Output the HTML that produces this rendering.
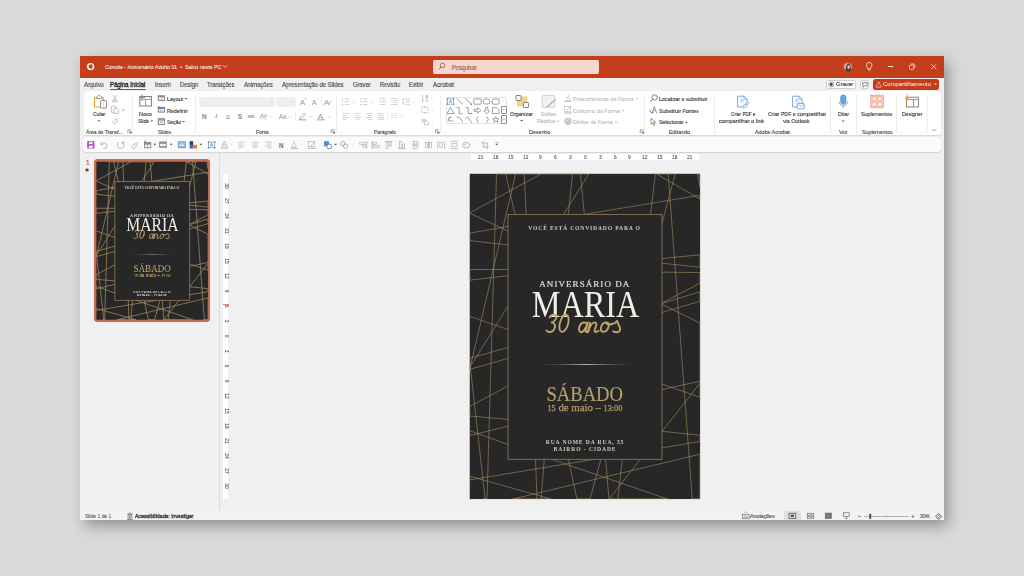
<!DOCTYPE html><html><head><meta charset="utf-8"><style>
*{margin:0;padding:0;box-sizing:border-box}
html,body{width:1024px;height:576px;overflow:hidden}
body{background:#d8d8d8;position:relative;font-family:"Liberation Sans",sans-serif}
.a{position:absolute}
.t{position:absolute;white-space:nowrap;transform-origin:0 50%;-webkit-text-stroke:0.1px currentColor;will-change:transform}
svg{overflow:visible}
</style></head><body>
<div class="a" style="left:0;top:0;width:1024px;height:576px;background:#d9d9d9"></div>
<div class="a" style="left:80px;top:56px;width:864px;height:464px;background:#f0f0f0;box-shadow:4.7px 6px 13.4px rgba(0,0,0,0.33)"></div>
<div class="a" style="left:80px;top:56px;width:864px;height:21.5px;background:#c43e1c"></div>
<svg class="a" style="left:85px;top:61px" width="12" height="12" viewBox="0 0 12 12"><circle cx="5.6" cy="5.6" r="3.7" fill="#fff" opacity="0.92"/><circle cx="5.6" cy="5.6" r="2" fill="#c43e1c"/><rect x="6" y="3.2" width="1" height="5" fill="#c43e1c"/></svg>
<div class="t" style="left:105.00px;top:64.01px;font:400 5.8px/6.96px 'Liberation Sans', sans-serif;color:#fdf0ea;transform:scaleX(0.9110);">Convite - Aniversário Adulto 01&nbsp; •&nbsp; Salvo neste PC</div>
<svg class="a" style="left:222px;top:64px" width="6" height="5" viewBox="0 0 6 5"><path d="M0.8 1.2 L3 3.4 L5.2 1.2" stroke="#fbe9e3" stroke-width="0.8" fill="none"/></svg>
<div class="a" style="left:433px;top:59.6px;width:166px;height:14.5px;background:#f2d8d0;border-radius:2px"></div>
<svg class="a" style="left:438px;top:62px" width="8" height="9" viewBox="0 0 8 9"><circle cx="4.6" cy="3.4" r="2.2" stroke="#a94a33" stroke-width="0.8" fill="none"/><path d="M3 5 L1 7.4" stroke="#a94a33" stroke-width="0.9"/></svg>
<div class="t" style="left:452.00px;top:63.54px;font:400 6.4px/7.68px 'Liberation Sans', sans-serif;color:#a94a33;transform:scaleX(0.8784);">Pesquisar</div>
<div class="a" style="left:887.8px;top:66.3px;width:5.2px;height:0.7px;background:#fbe9e3"></div>
<svg class="a" style="left:908px;top:63px" width="8" height="8" viewBox="0 0 8 8"><rect x="1.4" y="2" width="4.4" height="4.4" rx="1.2" stroke="#fbe9e3" stroke-width="0.8" fill="none"/><path d="M2.8 0.9 h2.6 a1.4 1.4 0 0 1 1.4 1.4 v2.6" stroke="#fbe9e3" stroke-width="0.7" fill="none"/></svg>
<svg class="a" style="left:930px;top:63px" width="8" height="8" viewBox="0 0 8 8"><path d="M1.2 1.2 L6.2 6.2 M6.2 1.2 L1.2 6.2" stroke="#fbe9e3" stroke-width="0.8"/></svg>
<div class="t" style="left:83.90px;top:80.84px;font:400 6.3px/7.56px 'Liberation Sans', sans-serif;color:#3a3a3a;transform:scaleX(0.9316);">Arquivo</div>
<div class="t" style="left:110.30px;top:80.84px;font:400 6.3px/7.56px 'Liberation Sans', sans-serif;color:#1f1f1f;transform:scaleX(0.9473);-webkit-text-stroke:0.32px currentColor;">Página Inicial</div>
<div class="t" style="left:154.80px;top:80.84px;font:400 6.3px/7.56px 'Liberation Sans', sans-serif;color:#3a3a3a;transform:scaleX(0.9141);">Inserir</div>
<div class="t" style="left:180.00px;top:80.84px;font:400 6.3px/7.56px 'Liberation Sans', sans-serif;color:#3a3a3a;transform:scaleX(0.9280);">Design</div>
<div class="t" style="left:207.00px;top:80.84px;font:400 6.3px/7.56px 'Liberation Sans', sans-serif;color:#3a3a3a;transform:scaleX(0.8928);">Transições</div>
<div class="t" style="left:243.70px;top:80.84px;font:400 6.3px/7.56px 'Liberation Sans', sans-serif;color:#3a3a3a;transform:scaleX(0.9209);">Animações</div>
<div class="t" style="left:282.10px;top:80.84px;font:400 6.3px/7.56px 'Liberation Sans', sans-serif;color:#3a3a3a;transform:scaleX(0.9272);">Apresentação de Slides</div>
<div class="t" style="left:353.00px;top:80.84px;font:400 6.3px/7.56px 'Liberation Sans', sans-serif;color:#3a3a3a;transform:scaleX(0.9141);">Gravar</div>
<div class="t" style="left:379.80px;top:80.84px;font:400 6.3px/7.56px 'Liberation Sans', sans-serif;color:#3a3a3a;transform:scaleX(0.8831);">Revisão</div>
<div class="t" style="left:409.00px;top:80.84px;font:400 6.3px/7.56px 'Liberation Sans', sans-serif;color:#3a3a3a;transform:scaleX(0.9077);">Exibir</div>
<div class="t" style="left:433.00px;top:80.84px;font:400 6.3px/7.56px 'Liberation Sans', sans-serif;color:#3a3a3a;transform:scaleX(0.9672);">Acrobat</div>
<div class="a" style="left:110.3px;top:89px;width:35.5px;height:1.4px;background:#c43e1c;border-radius:1px"></div>
<div class="a" style="left:826.4px;top:79.8px;width:29.3px;height:9.5px;background:#fff;border:0.8px solid #d0d0d0;border-radius:2px"></div>
<div class="t" style="left:835.60px;top:81.12px;font:400 6.0px/7.20px 'Liberation Sans', sans-serif;color:#262626;transform:scaleX(0.9489);">Gravar</div>
<div class="a" style="left:860.2px;top:79.8px;width:9.2px;height:9.5px;background:#fff;border:0.8px solid #d0d0d0;border-radius:2px"></div>
<svg class="a" style="left:861px;top:81px" width="8" height="8" viewBox="0 0 8 8"><path d="M1.8 1.6 h4.4 v3.4 h-2.8 l-1.2 1.2 v-1.2 h-0.4z" stroke="#333" stroke-width="0.6" fill="none"/></svg>
<div class="a" style="left:873.3px;top:79.2px;width:65.7px;height:10.5px;background:#c43e1c;border-radius:2.5px"></div>
<div class="t" style="left:883.00px;top:81.12px;font:400 6.0px/7.20px 'Liberation Sans', sans-serif;color:#fff;transform:scaleX(0.9791);-webkit-text-stroke:0px;">Compartilhamento</div>
<svg class="a" style="left:933px;top:82px" width="5" height="5" viewBox="0 0 5 5"><path d="M1 1.6 L2.5 3 L4 1.6z" fill="#fbe9e3"/></svg>
<div class="a" style="left:83.8px;top:91.4px;width:857px;height:43.7px;background:#fff;border-radius:4px 4px 2px 2px;box-shadow:0 0.5px 1px rgba(0,0,0,0.10)"></div>
<div class="a" style="left:83.4px;top:136.9px;width:857.4px;height:15.2px;background:#fbfbfb;border-radius:4px;box-shadow:0 0.6px 1px rgba(0,0,0,0.12)"></div>
<div class="t" style="left:93.00px;top:111.02px;font:400 5.9px/7.08px 'Liberation Sans', sans-serif;color:#2b2b2b;transform:scaleX(0.8865);">Colar</div>
<div class="t" style="left:86.40px;top:128.82px;font:400 5.9px/7.08px 'Liberation Sans', sans-serif;color:#3c3c3c;transform:scaleX(0.8483);">Área de Transf...</div>
<div class="t" style="left:139.00px;top:111.02px;font:400 5.9px/7.08px 'Liberation Sans', sans-serif;color:#2b2b2b;transform:scaleX(0.9293);">Novo</div>
<div class="t" style="left:137.80px;top:117.82px;font:400 5.9px/7.08px 'Liberation Sans', sans-serif;color:#2b2b2b;transform:scaleX(0.8537);">Slide</div>
<div class="t" style="left:166.80px;top:95.82px;font:400 5.9px/7.08px 'Liberation Sans', sans-serif;color:#2b2b2b;transform:scaleX(0.9145);">Layout</div>
<div class="t" style="left:166.80px;top:107.52px;font:400 5.9px/7.08px 'Liberation Sans', sans-serif;color:#2b2b2b;transform:scaleX(0.8894);">Redefinir</div>
<div class="t" style="left:166.80px;top:118.62px;font:400 5.9px/7.08px 'Liberation Sans', sans-serif;color:#2b2b2b;transform:scaleX(0.8368);">Seção</div>
<div class="t" style="left:157.60px;top:128.82px;font:400 5.9px/7.08px 'Liberation Sans', sans-serif;color:#3c3c3c;transform:scaleX(0.8276);">Slides</div>
<div class="a" style="left:199.3px;top:96.6px;width:75.4px;height:10.3px;background:#efefef;border-radius:2.2px"></div>
<div class="a" style="left:276.2px;top:96.6px;width:20.3px;height:10.3px;background:#efefef;border-radius:2.2px"></div>
<div class="t" style="left:299.80px;top:98.21px;font:400 7.6px/9.12px 'Liberation Sans', sans-serif;color:#9c9c9c;transform:scaleX(1.0258);">A</div>
<div class="t" style="left:312.20px;top:98.96px;font:400 6.8px/8.16px 'Liberation Sans', sans-serif;color:#9c9c9c;transform:scaleX(1.0142);">A</div>
<div class="t" style="left:324.00px;top:98.41px;font:400 7.6px/9.12px 'Liberation Sans', sans-serif;color:#9c9c9c;transform:scaleX(0.9863);">A</div>
<div class="t" style="left:202.20px;top:112.75px;font:700 6.6px/7.92px 'Liberation Sans', sans-serif;color:#8a8a8a;transform:scaleX(1.0070);">N</div>
<div class="t" style="left:215.30px;top:112.01px;font:italic 400 6.6px/7.92px 'Liberation Serif', serif;color:#9c9c9c;transform:scaleX(1.0918);">I</div>
<div class="t" style="left:226.30px;top:112.53px;font:400 6.2px/7.44px 'Liberation Sans', sans-serif;color:#9c9c9c;transform:scaleX(0.9189);">S</div>
<div class="t" style="left:237.60px;top:112.56px;font:700 6.8px/8.16px 'Liberation Sans', sans-serif;color:#8a8a8a;transform:scaleX(0.9260);">S</div>
<div class="t" style="left:248.00px;top:113.86px;font:400 4.8px/5.76px 'Liberation Sans', sans-serif;color:#9c9c9c;transform:scaleX(0.8528);">abc</div>
<div class="t" style="left:259.60px;top:112.90px;font:400 5.6px/6.72px 'Liberation Sans', sans-serif;color:#9c9c9c;transform:scaleX(1.0205);">AV</div>
<div class="t" style="left:278.60px;top:112.94px;font:400 6.4px/7.68px 'Liberation Sans', sans-serif;color:#9c9c9c;transform:scaleX(0.9453);">Aa</div>
<div class="t" style="left:317.60px;top:112.96px;font:400 6.8px/8.16px 'Liberation Sans', sans-serif;color:#9c9c9c;transform:scaleX(1.1464);">A</div>
<div class="t" style="left:256.00px;top:128.82px;font:400 5.9px/7.08px 'Liberation Sans', sans-serif;color:#3c3c3c;transform:scaleX(0.8616);">Fonte</div>
<div class="t" style="left:374.20px;top:128.82px;font:400 5.9px/7.08px 'Liberation Sans', sans-serif;color:#3c3c3c;transform:scaleX(0.8490);">Parágrafo</div>
<div class="a" style="left:445.6px;top:96.6px;width:61.9px;height:27.7px;border:0.7px solid #e2e2e2;border-radius:2px;background:#fff"></div>
<div class="a" style="left:500.5px;top:106px;width:6.4px;height:8.3px;border:0.7px solid #8c8c8c;border-radius:1px;background:#fff"></div>
<div class="a" style="left:500.5px;top:114.6px;width:6.4px;height:9.4px;border:0.7px solid #8c8c8c;border-radius:1px;background:#fff"></div>
<div class="t" style="left:510.20px;top:111.22px;font:400 5.9px/7.08px 'Liberation Sans', sans-serif;color:#2b2b2b;transform:scaleX(0.8801);">Organizar</div>
<div class="t" style="left:540.80px;top:111.22px;font:400 5.9px/7.08px 'Liberation Sans', sans-serif;color:#b4b4b4;transform:scaleX(0.8632);">Estilos</div>
<div class="t" style="left:536.80px;top:118.22px;font:400 5.9px/7.08px 'Liberation Sans', sans-serif;color:#b4b4b4;transform:scaleX(0.8638);">Rápidos</div>
<div class="t" style="left:573.30px;top:95.92px;font:400 5.9px/7.08px 'Liberation Sans', sans-serif;color:#b8b8b8;transform:scaleX(0.9088);">Preenchimento da Forma</div>
<div class="t" style="left:573.30px;top:107.62px;font:400 5.9px/7.08px 'Liberation Sans', sans-serif;color:#b8b8b8;transform:scaleX(0.9167);">Contorno da Forma</div>
<div class="t" style="left:573.30px;top:119.22px;font:400 5.9px/7.08px 'Liberation Sans', sans-serif;color:#b8b8b8;transform:scaleX(0.8859);">Efeitos de Forma</div>
<div class="t" style="left:528.60px;top:128.82px;font:400 5.9px/7.08px 'Liberation Sans', sans-serif;color:#3c3c3c;transform:scaleX(0.9061);">Desenho</div>
<div class="t" style="left:658.70px;top:95.92px;font:400 5.9px/7.08px 'Liberation Sans', sans-serif;color:#2b2b2b;transform:scaleX(0.8999);">Localizar e substituir</div>
<div class="t" style="left:658.70px;top:107.62px;font:400 5.9px/7.08px 'Liberation Sans', sans-serif;color:#2b2b2b;transform:scaleX(0.8990);">Substituir Fontes</div>
<div class="t" style="left:658.70px;top:119.22px;font:400 5.9px/7.08px 'Liberation Sans', sans-serif;color:#2b2b2b;transform:scaleX(0.8824);">Selecionar</div>
<div class="t" style="left:668.90px;top:128.82px;font:400 5.9px/7.08px 'Liberation Sans', sans-serif;color:#3c3c3c;transform:scaleX(0.9059);">Editando</div>
<div class="t" style="left:730.80px;top:111.02px;font:400 5.9px/7.08px 'Liberation Sans', sans-serif;color:#2b2b2b;transform:scaleX(0.7867);">Criar PDF e</div>
<div class="t" style="left:719.20px;top:118.02px;font:400 5.9px/7.08px 'Liberation Sans', sans-serif;color:#2b2b2b;transform:scaleX(0.9441);">compartilhar o link</div>
<div class="t" style="left:767.80px;top:111.02px;font:400 5.9px/7.08px 'Liberation Sans', sans-serif;color:#2b2b2b;transform:scaleX(0.8920);">Criar PDF e compartilhar</div>
<div class="t" style="left:783.40px;top:118.02px;font:400 5.9px/7.08px 'Liberation Sans', sans-serif;color:#2b2b2b;transform:scaleX(0.8945);">via Outlook</div>
<div class="t" style="left:755.40px;top:128.82px;font:400 5.9px/7.08px 'Liberation Sans', sans-serif;color:#3c3c3c;transform:scaleX(0.9042);">Adobe Acrobat</div>
<div class="t" style="left:837.70px;top:111.02px;font:400 5.9px/7.08px 'Liberation Sans', sans-serif;color:#2b2b2b;transform:scaleX(0.8830);">Ditar</div>
<div class="t" style="left:839.00px;top:128.82px;font:400 5.9px/7.08px 'Liberation Sans', sans-serif;color:#3c3c3c;transform:scaleX(0.8535);">Voz</div>
<div class="t" style="left:861.20px;top:111.02px;font:400 5.9px/7.08px 'Liberation Sans', sans-serif;color:#2b2b2b;transform:scaleX(0.9060);">Suplementos</div>
<div class="t" style="left:861.80px;top:128.82px;font:400 5.9px/7.08px 'Liberation Sans', sans-serif;color:#3c3c3c;transform:scaleX(0.8885);">Suplementos</div>
<div class="t" style="left:901.80px;top:111.02px;font:400 5.9px/7.08px 'Liberation Sans', sans-serif;color:#2b2b2b;transform:scaleX(0.8724);">Designer</div>
<div class="t" style="left:279.00px;top:142.14px;font:700 6.4px/7.68px 'Liberation Sans', sans-serif;color:#777;">N</div>
<div class="a" style="left:219px;top:152.5px;width:0.8px;height:358.5px;background:#dcdcdc"></div>
<div class="a" style="left:80px;top:510.5px;width:864px;height:0.8px;background:#e0e0e0"></div>
<div class="a" style="left:80px;top:511.3px;width:864px;height:8.7px;background:#f3f3f3"></div>
<div class="a" style="left:470.7px;top:154px;width:228.5px;height:6px;background:#fff"></div>
<div class="t" style="left:477.83px;top:154.76px;font:400 4.8px/5.76px 'Liberation Sans', sans-serif;color:#555;">21</div>
<div class="t" style="left:492.76px;top:154.76px;font:400 4.8px/5.76px 'Liberation Sans', sans-serif;color:#555;">18</div>
<div class="t" style="left:507.69px;top:154.76px;font:400 4.8px/5.76px 'Liberation Sans', sans-serif;color:#555;">15</div>
<div class="t" style="left:522.62px;top:154.76px;font:400 4.8px/5.76px 'Liberation Sans', sans-serif;color:#555;">12</div>
<div class="t" style="left:538.89px;top:154.76px;font:400 4.8px/5.76px 'Liberation Sans', sans-serif;color:#555;">9</div>
<div class="t" style="left:553.82px;top:154.76px;font:400 4.8px/5.76px 'Liberation Sans', sans-serif;color:#555;">6</div>
<div class="t" style="left:568.75px;top:154.76px;font:400 4.8px/5.76px 'Liberation Sans', sans-serif;color:#555;">3</div>
<div class="t" style="left:583.68px;top:154.76px;font:400 4.8px/5.76px 'Liberation Sans', sans-serif;color:#555;">0</div>
<div class="t" style="left:598.61px;top:154.76px;font:400 4.8px/5.76px 'Liberation Sans', sans-serif;color:#555;">3</div>
<div class="t" style="left:613.54px;top:154.76px;font:400 4.8px/5.76px 'Liberation Sans', sans-serif;color:#555;">6</div>
<div class="t" style="left:628.47px;top:154.76px;font:400 4.8px/5.76px 'Liberation Sans', sans-serif;color:#555;">9</div>
<div class="t" style="left:642.06px;top:154.76px;font:400 4.8px/5.76px 'Liberation Sans', sans-serif;color:#555;">12</div>
<div class="t" style="left:656.99px;top:154.76px;font:400 4.8px/5.76px 'Liberation Sans', sans-serif;color:#555;">15</div>
<div class="t" style="left:671.92px;top:154.76px;font:400 4.8px/5.76px 'Liberation Sans', sans-serif;color:#555;">18</div>
<div class="t" style="left:686.85px;top:154.76px;font:400 4.8px/5.76px 'Liberation Sans', sans-serif;color:#555;">21</div>
<div class="a" style="left:223px;top:174px;width:5px;height:324.6px;background:#fff"></div>
<div class="t" style="left:217.6px;top:183.4px;width:16px;height:6px;text-align:center;font:400 4.8px/6px 'Liberation Sans',sans-serif;color:#555;transform:rotate(90deg);transform-origin:50% 50%">30</div>
<div class="t" style="left:217.6px;top:198.37px;width:16px;height:6px;text-align:center;font:400 4.8px/6px 'Liberation Sans',sans-serif;color:#555;transform:rotate(90deg);transform-origin:50% 50%">27</div>
<div class="t" style="left:217.6px;top:213.34px;width:16px;height:6px;text-align:center;font:400 4.8px/6px 'Liberation Sans',sans-serif;color:#555;transform:rotate(90deg);transform-origin:50% 50%">24</div>
<div class="t" style="left:217.6px;top:228.31px;width:16px;height:6px;text-align:center;font:400 4.8px/6px 'Liberation Sans',sans-serif;color:#555;transform:rotate(90deg);transform-origin:50% 50%">21</div>
<div class="t" style="left:217.6px;top:243.28px;width:16px;height:6px;text-align:center;font:400 4.8px/6px 'Liberation Sans',sans-serif;color:#555;transform:rotate(90deg);transform-origin:50% 50%">18</div>
<div class="t" style="left:217.6px;top:258.25px;width:16px;height:6px;text-align:center;font:400 4.8px/6px 'Liberation Sans',sans-serif;color:#555;transform:rotate(90deg);transform-origin:50% 50%">15</div>
<div class="t" style="left:217.6px;top:273.22px;width:16px;height:6px;text-align:center;font:400 4.8px/6px 'Liberation Sans',sans-serif;color:#555;transform:rotate(90deg);transform-origin:50% 50%">12</div>
<div class="t" style="left:217.6px;top:288.19px;width:16px;height:6px;text-align:center;font:400 4.8px/6px 'Liberation Sans',sans-serif;color:#555;transform:rotate(90deg);transform-origin:50% 50%">9</div>
<div class="t" style="left:217.6px;top:303.16px;width:16px;height:6px;text-align:center;font:400 4.8px/6px 'Liberation Sans',sans-serif;color:#555;transform:rotate(90deg);transform-origin:50% 50%">6</div>
<div class="t" style="left:217.6px;top:318.13px;width:16px;height:6px;text-align:center;font:400 4.8px/6px 'Liberation Sans',sans-serif;color:#555;transform:rotate(90deg);transform-origin:50% 50%">3</div>
<div class="t" style="left:217.6px;top:333.1px;width:16px;height:6px;text-align:center;font:400 4.8px/6px 'Liberation Sans',sans-serif;color:#555;transform:rotate(90deg);transform-origin:50% 50%">0</div>
<div class="t" style="left:217.6px;top:348.07000000000005px;width:16px;height:6px;text-align:center;font:400 4.8px/6px 'Liberation Sans',sans-serif;color:#555;transform:rotate(90deg);transform-origin:50% 50%">3</div>
<div class="t" style="left:217.6px;top:363.04px;width:16px;height:6px;text-align:center;font:400 4.8px/6px 'Liberation Sans',sans-serif;color:#555;transform:rotate(90deg);transform-origin:50% 50%">6</div>
<div class="t" style="left:217.6px;top:378.01px;width:16px;height:6px;text-align:center;font:400 4.8px/6px 'Liberation Sans',sans-serif;color:#555;transform:rotate(90deg);transform-origin:50% 50%">9</div>
<div class="t" style="left:217.6px;top:392.98px;width:16px;height:6px;text-align:center;font:400 4.8px/6px 'Liberation Sans',sans-serif;color:#555;transform:rotate(90deg);transform-origin:50% 50%">12</div>
<div class="t" style="left:217.6px;top:407.95000000000005px;width:16px;height:6px;text-align:center;font:400 4.8px/6px 'Liberation Sans',sans-serif;color:#555;transform:rotate(90deg);transform-origin:50% 50%">15</div>
<div class="t" style="left:217.6px;top:422.92px;width:16px;height:6px;text-align:center;font:400 4.8px/6px 'Liberation Sans',sans-serif;color:#555;transform:rotate(90deg);transform-origin:50% 50%">18</div>
<div class="t" style="left:217.6px;top:437.89px;width:16px;height:6px;text-align:center;font:400 4.8px/6px 'Liberation Sans',sans-serif;color:#555;transform:rotate(90deg);transform-origin:50% 50%">21</div>
<div class="t" style="left:217.6px;top:452.86px;width:16px;height:6px;text-align:center;font:400 4.8px/6px 'Liberation Sans',sans-serif;color:#555;transform:rotate(90deg);transform-origin:50% 50%">24</div>
<div class="t" style="left:217.6px;top:467.83000000000004px;width:16px;height:6px;text-align:center;font:400 4.8px/6px 'Liberation Sans',sans-serif;color:#555;transform:rotate(90deg);transform-origin:50% 50%">27</div>
<div class="t" style="left:217.6px;top:482.80000000000007px;width:16px;height:6px;text-align:center;font:400 4.8px/6px 'Liberation Sans',sans-serif;color:#555;transform:rotate(90deg);transform-origin:50% 50%">30</div>
<div class="a" style="left:222.6px;top:303.6px;width:6px;height:0.6px;background:#f08070"></div>
<div class="t" style="left:85.30px;top:512.62px;font:400 5.9px/7.08px 'Liberation Sans', sans-serif;color:#505050;transform:scaleX(0.8472);">Slide 1 de 1</div>
<div class="t" style="left:135.10px;top:512.52px;font:400 6.0px/7.20px 'Liberation Sans', sans-serif;color:#2a2a2a;transform:scaleX(0.8698);-webkit-text-stroke:0.3px currentColor;">Acessibilidade: investigar</div>
<div class="t" style="left:750.00px;top:512.62px;font:400 5.9px/7.08px 'Liberation Sans', sans-serif;color:#404040;transform:scaleX(0.8859);">Anotações</div>
<div class="a" style="left:783.5px;top:511.3px;width:17px;height:8.7px;background:#dedede"></div>
<div class="t" style="left:920.30px;top:512.62px;font:400 5.9px/7.08px 'Liberation Sans', sans-serif;color:#404040;transform:scaleX(0.7960);">30%</div>
<svg width="0" height="0" style="position:absolute"><defs>
<linearGradient id="dv" x1="0" x2="1" y1="0" y2="0"><stop offset="0" stop-color="#8a7656" stop-opacity="0"/><stop offset="0.5" stop-color="#d8d4cc"/><stop offset="1" stop-color="#8a7656" stop-opacity="0"/></linearGradient>
<symbol id="slide" viewBox="0 0 230.8 325.6">
<rect x="0" y="0" width="230.8" height="325.6" fill="#272727"/>
<path d="M27.0 0.4L17.5 325.6M36.2 0.4L45.5 40.7M46.1 0.4L0.0 196.4M54.7 0.4L56.7 40.7M71.3 0.4L0.0 39.5M0.0 39.5L38.4 57.4M103.0 0.4L98.9 40.7M110.9 0.4L114.8 40.7M119.3 0.4L94.2 40.6M185.8 0.4L181.1 40.7M187.0 0.4L230.8 25.7M198.7 0.4L222.8 325.6M205.7 0.4L192.4 50.1M115.8 40.6L230.8 21.6M228.0 0.4L230.8 14.0M0.0 59.6L38.4 52.8M0.0 66.9L38.4 71.4M0.0 95.9L38.4 95.9M0.0 106.6L38.4 102.1M38.4 132.6L0.0 194.4M0.0 142.7L38.4 155.9M0.0 184.7L38.4 174.0M0.0 195.9L38.4 184.7M0.7 192.4L15.7 325.6M38.4 212.5L0.0 232.8M0.0 242.4L38.4 245.8M0.0 262.1L38.4 252.6M0.0 257.1L38.4 270.8M0.0 302.5L82.0 325.6M0.0 306.4L124.5 285.7M66.0 285.6L67.5 325.6M74.8 285.6L71.5 325.6M42.9 325.6L230.8 280.5M82.2 285.7L198.5 325.6M98.9 285.7L107.5 325.6M131.4 285.7L120.4 325.6M136.1 285.7L139.5 325.6M152.8 285.7L148.3 325.6M170.9 285.6L139.5 325.6M192.3 274.3L230.8 267.8M192.6 210.4L230.8 223.9M192.6 216.0L230.8 207.5M192.6 257.7L230.8 209.2M192.6 257.7L230.8 261.7M192.6 89.6L230.8 93.7M192.6 98.6L230.8 99.0M192.6 129.3L230.8 109.5M192.6 129.8L230.8 118.0M192.6 138.8L230.8 127.6M192.6 130.9L230.8 149.6M192.6 85.0L230.8 81.1" stroke="#a38a62" stroke-width="0.62" fill="none" vector-effect="non-scaling-stroke"/><path d="M27.0 0.35L119.3 0.35M185.8 0.35L205.7 0.35M228.0 0.35L230.8 0.35M13.5 325.25L17.5 325.25M42.9 325.25L82.0 325.25M107.5 325.25L120.4 325.25M139.5 325.25L198.5 325.25M222.8 325.25L230.8 325.25M0.35 59.6L0.35 66.9M0.35 95.9L0.35 106.6M0.35 184.7L0.35 195.9M0.35 232.8L0.35 242.4M0.35 257.1L0.35 262.1M0.35 302.5L0.35 306.4M230.45 0.4L230.45 14.0M230.45 21.6L230.45 25.7M230.45 81.1L230.45 93.7M230.45 99.0L230.45 109.5M230.45 118.0L230.45 127.6M230.45 149.6L230.45 223.9M230.45 261.7L230.45 267.8M230.45 280.5L230.45 325.6" stroke="#a38a62" stroke-width="0.7" fill="none" vector-effect="non-scaling-stroke"/>
<rect x="38.5" y="40.9" width="154" height="244.9" fill="#272727" stroke="#a38a62" stroke-width="0.7" vector-effect="non-scaling-stroke"/>
<text x="58.8" y="56" font-family="Liberation Serif" font-weight="700" font-size="5.7" fill="#cdc9c1" textLength="111.7" lengthAdjust="spacing">VOCÊ ESTÁ CONVIDADO PARA O</text>
<text x="69.8" y="113.5" font-family="Liberation Serif" font-size="9" stroke="#dedad2" stroke-width="0.22" fill="#dedad2" textLength="90" lengthAdjust="spacing">ANIVERSÁRIO DA</text>
<text x="62.2" y="143.2" font-family="Liberation Serif" font-size="38.6" fill="#f2eee6" textLength="107.6" lengthAdjust="spacingAndGlyphs">MARIA</text>
<g transform="translate(-469.5 -173.6)" fill="none" stroke="#c4a46c" stroke-width="1.85" stroke-linecap="round" stroke-linejoin="round">
<path d="M549.6 317.4 C550.4 314.8 555.6 313.4 556.4 316.2 C557 318.6 554.2 321.8 551.6 322.6 C555 322.6 555.8 326 554.4 328.8 C552.8 332.4 548.2 333.2 546.4 330.4"/>
<ellipse cx="564" cy="323.3" rx="4.1" ry="8.9" transform="rotate(16 564 323.3)"/>
<path d="M586.8 323.6 C585.6 321.8 581 322 579.4 326.6 C578 330.6 580 332.8 582 332 C584.4 331.2 586.4 326.4 587.8 322.4 L585.6 330.4 C585.2 332.4 587 332.4 588.8 330.8"/>
<path d="M590 322.6 L587.8 332.2 C589.6 327 592 322.4 594.6 322.4 C596.8 322.4 596.4 324.6 595.8 326.6 L594.6 330.4 C594.2 332.4 596.2 332.6 598.6 330.8"/>
<path d="M606.4 322.4 C603.2 321.9 600.6 326 600.8 329.2 C601 332.8 605.6 332.6 607.6 329.2 C609.4 326 609 322.6 606.4 322.4 C606 324.2 608.4 325.2 612 324"/>
<path d="M612 324.2 C614.4 323.6 616 322.4 617.2 320.8 C617.2 323.8 620.4 326.4 620.2 329.4 C620 332.2 616.4 333 613.2 331.4"/>
</g>
<rect x="69.5" y="190.6" width="94.8" height="0.8" fill="url(#dv)"/>
<text x="76.9" y="227.1" font-family="Liberation Serif" font-size="21" stroke="#b89e6c" stroke-width="0.2" fill="#b89e6c" textLength="76.6" lengthAdjust="spacingAndGlyphs">SÁBADO</text>
<text x="78" y="237.2" font-family="Liberation Serif" font-size="10" stroke="#b39a6a" stroke-width="0.25" fill="#b39a6a" textLength="74.8" lengthAdjust="spacingAndGlyphs"><tspan font-size="7.6" dy="0.5">15</tspan><tspan dy="-0.5"> de maio – </tspan><tspan font-size="7.6" dy="0.4">13:00</tspan></text>
<text x="76.2" y="270.4" font-family="Liberation Serif" font-weight="700" font-size="5.6" fill="#cdc9c1" textLength="77.7" lengthAdjust="spacing">RUA NOME DA RUA, 55</text>
<text x="84.1" y="277.1" font-family="Liberation Serif" font-weight="700" font-size="5.6" fill="#cdc9c1" textLength="62" lengthAdjust="spacing">BAIRRO - CIDADE</text>
</symbol>
<symbol id="slidet" viewBox="0 0 230.8 325.6">
<rect x="0" y="0" width="230.8" height="325.6" fill="#272727"/>
<path d="M27.0 0.4L17.5 325.6M36.2 0.4L45.5 40.7M46.1 0.4L0.0 196.4M54.7 0.4L56.7 40.7M71.3 0.4L0.0 39.5M0.0 39.5L38.4 57.4M103.0 0.4L98.9 40.7M110.9 0.4L114.8 40.7M119.3 0.4L94.2 40.6M185.8 0.4L181.1 40.7M187.0 0.4L230.8 25.7M198.7 0.4L222.8 325.6M205.7 0.4L192.4 50.1M115.8 40.6L230.8 21.6M228.0 0.4L230.8 14.0M0.0 59.6L38.4 52.8M0.0 66.9L38.4 71.4M0.0 95.9L38.4 95.9M0.0 106.6L38.4 102.1M38.4 132.6L0.0 194.4M0.0 142.7L38.4 155.9M0.0 184.7L38.4 174.0M0.0 195.9L38.4 184.7M0.7 192.4L15.7 325.6M38.4 212.5L0.0 232.8M0.0 242.4L38.4 245.8M0.0 262.1L38.4 252.6M0.0 257.1L38.4 270.8M0.0 302.5L82.0 325.6M0.0 306.4L124.5 285.7M66.0 285.6L67.5 325.6M74.8 285.6L71.5 325.6M42.9 325.6L230.8 280.5M82.2 285.7L198.5 325.6M98.9 285.7L107.5 325.6M131.4 285.7L120.4 325.6M136.1 285.7L139.5 325.6M152.8 285.7L148.3 325.6M170.9 285.6L139.5 325.6M192.3 274.3L230.8 267.8M192.6 210.4L230.8 223.9M192.6 216.0L230.8 207.5M192.6 257.7L230.8 209.2M192.6 257.7L230.8 261.7M192.6 89.6L230.8 93.7M192.6 98.6L230.8 99.0M192.6 129.3L230.8 109.5M192.6 129.8L230.8 118.0M192.6 138.8L230.8 127.6M192.6 130.9L230.8 149.6M192.6 85.0L230.8 81.1" stroke="#a38a62" stroke-width="0.75" fill="none" vector-effect="non-scaling-stroke"/><path d="M27.0 0.35L119.3 0.35M185.8 0.35L205.7 0.35M228.0 0.35L230.8 0.35M13.5 325.25L17.5 325.25M42.9 325.25L82.0 325.25M107.5 325.25L120.4 325.25M139.5 325.25L198.5 325.25M222.8 325.25L230.8 325.25M0.35 59.6L0.35 66.9M0.35 95.9L0.35 106.6M0.35 184.7L0.35 195.9M0.35 232.8L0.35 242.4M0.35 257.1L0.35 262.1M0.35 302.5L0.35 306.4M230.45 0.4L230.45 14.0M230.45 21.6L230.45 25.7M230.45 81.1L230.45 93.7M230.45 99.0L230.45 109.5M230.45 118.0L230.45 127.6M230.45 149.6L230.45 223.9M230.45 261.7L230.45 267.8M230.45 280.5L230.45 325.6" stroke="#a38a62" stroke-width="0.7" fill="none" vector-effect="non-scaling-stroke"/>
<rect x="38.5" y="40.9" width="154" height="244.9" fill="#272727" stroke="#a38a62" stroke-width="0.7" vector-effect="non-scaling-stroke"/>
<text x="58.8" y="56" font-family="Liberation Serif" font-weight="700" font-size="6.6" fill="#dedad2" textLength="111.7" lengthAdjust="spacing">VOCÊ ESTÁ CONVIDADO PARA O</text>
<text x="69.8" y="113.5" font-family="Liberation Serif" font-size="9" stroke="#dedad2" stroke-width="0.22" fill="#dedad2" textLength="90" lengthAdjust="spacing">ANIVERSÁRIO DA</text>
<text x="62.2" y="143.2" font-family="Liberation Serif" font-size="38.6" fill="#f2eee6" textLength="107.6" lengthAdjust="spacingAndGlyphs">MARIA</text>
<g transform="translate(-469.5 -173.6)" fill="none" stroke="#c4a46c" stroke-width="1.85" stroke-linecap="round" stroke-linejoin="round">
<path d="M549.6 317.4 C550.4 314.8 555.6 313.4 556.4 316.2 C557 318.6 554.2 321.8 551.6 322.6 C555 322.6 555.8 326 554.4 328.8 C552.8 332.4 548.2 333.2 546.4 330.4"/>
<ellipse cx="564" cy="323.3" rx="4.1" ry="8.9" transform="rotate(16 564 323.3)"/>
<path d="M586.8 323.6 C585.6 321.8 581 322 579.4 326.6 C578 330.6 580 332.8 582 332 C584.4 331.2 586.4 326.4 587.8 322.4 L585.6 330.4 C585.2 332.4 587 332.4 588.8 330.8"/>
<path d="M590 322.6 L587.8 332.2 C589.6 327 592 322.4 594.6 322.4 C596.8 322.4 596.4 324.6 595.8 326.6 L594.6 330.4 C594.2 332.4 596.2 332.6 598.6 330.8"/>
<path d="M606.4 322.4 C603.2 321.9 600.6 326 600.8 329.2 C601 332.8 605.6 332.6 607.6 329.2 C609.4 326 609 322.6 606.4 322.4 C606 324.2 608.4 325.2 612 324"/>
<path d="M612 324.2 C614.4 323.6 616 322.4 617.2 320.8 C617.2 323.8 620.4 326.4 620.2 329.4 C620 332.2 616.4 333 613.2 331.4"/>
</g>
<rect x="69.5" y="190.6" width="94.8" height="0.8" fill="url(#dv)"/>
<text x="76.9" y="227.1" font-family="Liberation Serif" font-size="21" stroke="#b89e6c" stroke-width="0.2" fill="#b89e6c" textLength="76.6" lengthAdjust="spacingAndGlyphs">SÁBADO</text>
<text x="78" y="237.2" font-family="Liberation Serif" font-size="10" stroke="#b39a6a" stroke-width="0.25" fill="#b39a6a" textLength="74.8" lengthAdjust="spacingAndGlyphs"><tspan font-size="7.6" dy="0.5">15</tspan><tspan dy="-0.5"> de maio – </tspan><tspan font-size="7.6" dy="0.4">13:00</tspan></text>
<text x="76.2" y="270.4" font-family="Liberation Serif" font-weight="700" font-size="6.6" fill="#dedad2" textLength="77.7" lengthAdjust="spacing">RUA NOME DA RUA, 55</text>
<text x="84.1" y="277.1" font-family="Liberation Serif" font-weight="700" font-size="6.6" fill="#dedad2" textLength="62" lengthAdjust="spacing">BAIRRO - CIDADE</text>
</symbol></defs></svg>
<svg class="a" style="left:469px;top:173px;will-change:transform" width="232" height="328"><use href="#slide" x="0.5" y="0.6" width="230.8" height="325.6"/></svg>
<div class="a" style="left:94.4px;top:159.4px;width:115.6px;height:162.6px;background:#c96a4c;border-radius:3.5px"></div>
<svg class="a" style="left:96px;top:161px;will-change:transform" width="113" height="160"><use href="#slidet" x="0.2" y="0.2" width="112" height="159"/></svg>
<div class="t" style="left:85.50px;top:159.05px;font:400 6.5px/7.80px 'Liberation Sans', sans-serif;color:#c43e1c;">1</div>
<svg class="a" style="left:84px;top:167px" width="6" height="6" viewBox="0 0 6 6"><path d="M3 0.6 L3.7 2.2 L5.4 2.3 L4.1 3.4 L4.5 5 L3 4.1 L1.5 5 L1.9 3.4 L0.6 2.3 L2.3 2.2z" fill="#444"/></svg>
<svg class="a" style="left:0;top:0" width="1024" height="576" viewBox="0 0 1024 576"><circle cx="847.9" cy="66.7" r="5" fill="#e3403a"/><circle cx="847.9" cy="66.7" r="3.8" fill="#c9b7a6"/><path d="M845.6 70.6 c0.2 -3 0.6 -6.4 2.8 -7.4 c1.6 0.4 2.4 2.2 2.2 4.4 c0.6 1.4 0.6 2.4 0.2 3.2 a4.1 4.1 0 0 1 -5.2 -0.2z" fill="#4a3b33"/><ellipse cx="848.6" cy="67" rx="1.3" ry="2" fill="#e2c3a8"/><path d="M869.2 62.4 a2.7 2.7 0 0 1 1.6 4.9 v1.5 h-3.2 v-1.5 a2.7 2.7 0 0 1 1.6 -4.9z M868 70 h2.4" stroke="#fbe9e3" stroke-width="0.8" fill="none"/><circle cx="831.2" cy="84.4" r="2.5" stroke="#444" stroke-width="0.55" fill="none"/><circle cx="831.2" cy="84.4" r="1.35" fill="#333"/><path d="M876.6 84.6 v2.6 h4.4 v-2.6 M878.8 82.2 v3 M877.6 83.4 L878.8 82.2 L880 83.4" stroke="#fbe9e3" stroke-width="0.6" fill="none"/><rect x="94.6" y="97.3" width="8.6" height="9.7" rx="0.6" fill="#fff" stroke="#f0a030" stroke-width="1.1"/><path d="M96.6 98.6 v-1.6 l2.5 -1.9 l2.5 1.9 v1.6z" fill="#fff" stroke="#808080" stroke-width="0.8"/><rect x="100.6" y="100.5" width="5.8" height="7.7" rx="0.8" fill="#fff" stroke="#7a7a7a" stroke-width="0.9"/><path d="M103.5 101.5 v6" stroke="#c8c8c8" stroke-width="0.5"/><path d="M97.5 120.3 L99 121.8 L100.5 120.3z" fill="#555"/><path d="M113.2 95.2 L116.5 100.6 M116.5 95.2 L113.2 100.6" stroke="#9a9a9a" stroke-width="0.6" fill="none"/><circle cx="113.4" cy="101.3" r="0.9" stroke="#9a9a9a" stroke-width="0.6" fill="none"/><circle cx="116.3" cy="101.3" r="0.9" stroke="#9a9a9a" stroke-width="0.6" fill="none"/><rect x="111.4" y="106.3" width="4.6" height="6" rx="0.7" stroke="#9a9a9a" stroke-width="0.6" fill="#fff"/><path d="M114 108.3 h3 l1.6 1.6 v3.5 h-4.6z" stroke="#9a9a9a" stroke-width="0.6" fill="#fff"/><path d="M121.8 109.5 L123.3 111.0 L124.8 109.5z" fill="#9a9a9a"/><path d="M112.5 122.2 l3 -3 l2 2 l-3 3z M116.2 119.5 l1.8 -1.3" stroke="#9a9a9a" stroke-width="0.65" fill="none"/><path d="M127.8 133.20000000000002 v-3.4 h3.4" stroke="#666" stroke-width="0.6" fill="none"/><path d="M128.8 130.8 L131.0 133.0 M131.2 131.4 v1.8 h-1.8" stroke="#444" stroke-width="0.7" fill="none"/><rect x="132.05" y="95" width="0.7" height="38.5" fill="#e1e1e1"/><rect x="139.8" y="96.5" width="11.6" height="9.5" fill="#fff" stroke="#7d7d7d" stroke-width="1"/><path d="M140.2 99.3 h10.8 M145.6 99.3 v6.4" stroke="#7d7d7d" stroke-width="0.8"/><path d="M142 94.3 v6.4 M138.8 97.5 h6.4" stroke="#5cb85c" stroke-width="1.1"/><path d="M150.3 120.5 L151.8 122.0 L153.3 120.5z" fill="#555"/><rect x="157.8" y="95.2" width="7.2" height="5.8" fill="#8a8a8a"/><rect x="158.9" y="97.4" width="2.3" height="2.4" fill="#fff"/><rect x="161.6" y="97.4" width="2.3" height="2.4" fill="#fff"/><path d="M184.4 97.89999999999999 L185.9 99.39999999999999 L187.4 97.89999999999999z" fill="#555"/><rect x="157.8" y="106.8" width="7.2" height="5.8" fill="#8a8a8a"/><rect x="158.9" y="109" width="5" height="2.5" fill="#fff"/><path d="M157.6 106.4 h2.6 l-0.7 0.8 l1.5 1.5 l-0.9 0.9 l-1.5 -1.5 l-0.8 0.7z" fill="#3a8ee6"/><rect x="159.6" y="109.6" width="2.6" height="1.3" fill="#9cc6f0"/><rect x="157.8" y="118.3" width="7.2" height="6.8" fill="#8a8a8a"/><rect x="157.8" y="118.3" width="7.2" height="1.4" fill="#6cc070"/><rect x="158.9" y="120.6" width="5" height="3.4" fill="#fff"/><rect x="159.8" y="121.6" width="3.2" height="1.2" fill="#9a9a9a"/><path d="M182.1 121.1 L183.6 122.6 L185.1 121.1z" fill="#555"/><rect x="195.15" y="95" width="0.7" height="38.5" fill="#e1e1e1"/><path d="M270.9 101.25 L272 102.35 L273.1 101.25" stroke="#b0b0b0" stroke-width="0.55" fill="none"/><path d="M291.5 101.25 L292.6 102.35 L293.70000000000005 101.25" stroke="#b0b0b0" stroke-width="0.55" fill="none"/><path d="M304.6 98.8 h1.8 M305.5 97.9 v1.8" stroke="#a8a8a8" stroke-width="0.5"/><path d="M317 98.8 h1.8" stroke="#a8a8a8" stroke-width="0.5"/><rect x="321" y="97" width="0.6" height="10" fill="#e0e0e0"/><path d="M328 103 l2.5 -1.8 l1 1.2 l-2.5 1.8z" stroke="#a8a8a8" stroke-width="0.6" fill="none"/><rect x="226.3" y="118.6" width="3.8" height="0.5" fill="#a8a8a8"/><rect x="248" y="116" width="6.6" height="0.5" fill="#a8a8a8"/><path d="M259.8 119 h7" stroke="#a8a8a8" stroke-width="0.5" stroke-dasharray="1.4 0.8"/><path d="M269.7 116.3 L270.7 117.3 L271.7 116.3" stroke="#a8a8a8" stroke-width="0.55" fill="none"/><path d="M288.4 116.3 L289.4 117.3 L290.4 116.3" stroke="#a8a8a8" stroke-width="0.55" fill="none"/><rect x="295.4" y="111" width="0.6" height="10.5" fill="#e0e0e0"/><path d="M299.5 117.6 l4.6 -4.6 l1.4 1.4 l-4.6 4.6 h-1.4z" stroke="#9a9a9a" stroke-width="0.65" fill="none"/><rect x="298.6" y="119.4" width="7.4" height="0.9" fill="#9a9a9a"/><path d="M310.0 116.3 L311 117.3 L312.0 116.3" stroke="#a8a8a8" stroke-width="0.55" fill="none"/><rect x="317" y="119.4" width="7.8" height="0.9" fill="#9a9a9a"/><path d="M328.0 116.3 L329 117.3 L330.0 116.3" stroke="#a8a8a8" stroke-width="0.55" fill="none"/><path d="M331.2 133.20000000000002 v-3.4 h3.4" stroke="#666" stroke-width="0.6" fill="none"/><path d="M332.2 130.8 L334.4 133.0 M334.59999999999997 131.4 v1.8 h-1.8" stroke="#444" stroke-width="0.7" fill="none"/><rect x="336.04999999999995" y="95" width="0.7" height="38.5" fill="#e1e1e1"/><circle cx="342.6" cy="99.0" r="0.65" fill="#b4b4b4"/><rect x="344.6" y="98.7" width="4.5" height="0.6" fill="#b4b4b4"/><circle cx="342.6" cy="101.8" r="0.65" fill="#b4b4b4"/><rect x="344.6" y="101.5" width="4.5" height="0.6" fill="#b4b4b4"/><circle cx="342.6" cy="104.6" r="0.65" fill="#b4b4b4"/><rect x="344.6" y="104.3" width="4.5" height="0.6" fill="#b4b4b4"/><path d="M352.90000000000003 101.55 L353.8 102.45 L354.7 101.55" stroke="#b8b8b8" stroke-width="0.55" fill="none"/><rect x="360.4" y="98.4" width="1" height="1.4" fill="#b4b4b4"/><rect x="363.0" y="98.7" width="4.5" height="0.6" fill="#b4b4b4"/><rect x="360.4" y="101.2" width="1" height="1.4" fill="#b4b4b4"/><rect x="363.0" y="101.5" width="4.5" height="0.6" fill="#b4b4b4"/><rect x="360.4" y="104.0" width="1" height="1.4" fill="#b4b4b4"/><rect x="363.0" y="104.3" width="4.5" height="0.6" fill="#b4b4b4"/><path d="M370.70000000000005 101.55 L371.6 102.45 L372.5 101.55" stroke="#b8b8b8" stroke-width="0.55" fill="none"/><rect x="379.2" y="98.4" width="6.6" height="0.55" fill="#b4b4b4"/><rect x="382.2" y="100.4" width="3.6" height="0.55" fill="#b4b4b4"/><rect x="382.2" y="102.4" width="3.6" height="0.55" fill="#b4b4b4"/><rect x="379.2" y="104.4" width="6.6" height="0.55" fill="#b4b4b4"/><path d="M379.4 101.60000000000001 l1.4 -1 v2z" fill="#b4b4b4"/><rect x="390.8" y="98.4" width="6.6" height="0.55" fill="#b4b4b4"/><rect x="393.8" y="100.4" width="3.6" height="0.55" fill="#b4b4b4"/><rect x="393.8" y="102.4" width="3.6" height="0.55" fill="#b4b4b4"/><rect x="390.8" y="104.4" width="6.6" height="0.55" fill="#b4b4b4"/><path d="M393.0 101.60000000000001 l-1.4 -1 v2z" fill="#b4b4b4"/><path d="M403.2 98.5 v6 M402 99.8 l1.2 -1.3 l1.2 1.3 M402 103.2 l1.2 1.3 l1.2 -1.3" stroke="#b4b4b4" stroke-width="0.55" fill="none"/><rect x="405.6" y="98.6" width="4" height="0.55" fill="#b4b4b4"/><rect x="405.6" y="100.5" width="4" height="0.55" fill="#b4b4b4"/><rect x="405.6" y="102.39999999999999" width="4" height="0.55" fill="#b4b4b4"/><rect x="405.6" y="104.3" width="4" height="0.55" fill="#b4b4b4"/><path d="M412.8 101.55 L413.7 102.45 L414.59999999999997 101.55" stroke="#b8b8b8" stroke-width="0.55" fill="none"/><rect x="342.3" y="113.2" width="6.6" height="0.55" fill="#b4b4b4"/><rect x="342.3" y="115.10000000000001" width="4.2" height="0.55" fill="#b4b4b4"/><rect x="342.3" y="117.0" width="6.6" height="0.55" fill="#b4b4b4"/><rect x="342.3" y="118.9" width="4.2" height="0.55" fill="#b4b4b4"/><rect x="354.2" y="113.2" width="6.6" height="0.55" fill="#b4b4b4"/><rect x="355.4" y="115.10000000000001" width="4.2" height="0.55" fill="#b4b4b4"/><rect x="354.2" y="117.0" width="6.6" height="0.55" fill="#b4b4b4"/><rect x="355.4" y="118.9" width="4.2" height="0.55" fill="#b4b4b4"/><rect x="365.8" y="113.2" width="6.6" height="0.55" fill="#b4b4b4"/><rect x="368.2" y="115.10000000000001" width="4.2" height="0.55" fill="#b4b4b4"/><rect x="365.8" y="117.0" width="6.6" height="0.55" fill="#b4b4b4"/><rect x="368.2" y="118.9" width="4.2" height="0.55" fill="#b4b4b4"/><rect x="377.6" y="113.2" width="6.6" height="0.55" fill="#b4b4b4"/><rect x="377.6" y="115.10000000000001" width="6.6" height="0.55" fill="#b4b4b4"/><rect x="377.6" y="117.0" width="6.6" height="0.55" fill="#b4b4b4"/><rect x="377.6" y="118.9" width="6.6" height="0.55" fill="#b4b4b4"/><rect x="387" y="111" width="0.6" height="11" fill="#e0e0e0"/><rect x="390.8" y="113.5" width="2.2" height="0.5" fill="#b4b4b4"/><rect x="394.6" y="113.5" width="2.2" height="0.5" fill="#b4b4b4"/><rect x="390.8" y="115.5" width="2.2" height="0.5" fill="#b4b4b4"/><rect x="394.6" y="115.5" width="2.2" height="0.5" fill="#b4b4b4"/><rect x="390.8" y="117.5" width="2.2" height="0.5" fill="#b4b4b4"/><rect x="394.6" y="117.5" width="2.2" height="0.5" fill="#b4b4b4"/><path d="M400.1 115.85 L401 116.75 L401.9 115.85" stroke="#b8b8b8" stroke-width="0.55" fill="none"/><path d="M422.6 95 v6.6 M426.8 95 v6.6 M421.8 100.6 l0.8 1 l0.8 -1 M426 100.6 l0.8 1 l0.8 -1" stroke="#9c9c9c" stroke-width="0.6" fill="none"/><path d="M425.6 98 l1.2 -3 l1.2 3" stroke="#9c9c9c" stroke-width="0.5" fill="none"/><path d="M431.3 98.14999999999999 L432.2 99.05 L433.09999999999997 98.14999999999999" stroke="#b0b0b0" stroke-width="0.55" fill="none"/><rect x="421.6" y="107" width="6.6" height="5.6" stroke="#9c9c9c" stroke-width="0.55" fill="none" stroke-dasharray="1.2 0.7"/><path d="M424.9 106 v1.6 M424.9 112 v1.6" stroke="#9c9c9c" stroke-width="0.6"/><path d="M431.3 109.75 L432.2 110.65 L433.09999999999997 109.75" stroke="#b0b0b0" stroke-width="0.55" fill="none"/><path d="M421.6 119.2 h3.6 v2 M421.6 120.6 h2.6 M421.6 122 h2" stroke="#9c9c9c" stroke-width="0.55" fill="none"/><path d="M424.4 121 h3 l1.4 1.4 v2.4 h-4.4z" stroke="#9c9c9c" stroke-width="0.55" fill="none"/><path d="M431.3 121.75 L432.2 122.65 L433.09999999999997 121.75" stroke="#b0b0b0" stroke-width="0.55" fill="none"/><path d="M435.6 133.20000000000002 v-3.4 h3.4" stroke="#666" stroke-width="0.6" fill="none"/><path d="M436.6 130.8 L438.8 133.0 M439.0 131.4 v1.8 h-1.8" stroke="#444" stroke-width="0.7" fill="none"/><rect x="440.45" y="95" width="0.7" height="38.5" fill="#e1e1e1"/><rect x="447.6" y="98.8" width="6" height="5.4" fill="#fff" stroke="#8a8a8a" stroke-width="0.6"/><path d="M449.4 102.8 l1.2 -3 l1.2 3 M449.9 101.8 h1.4" stroke="#2b7cd3" stroke-width="0.6" fill="none"/><rect x="446.90000000000003" y="98.1" width="1.4" height="1.4" fill="#3c95e8"/><rect x="452.90000000000003" y="98.1" width="1.4" height="1.4" fill="#3c95e8"/><rect x="446.90000000000003" y="103.5" width="1.4" height="1.4" fill="#3c95e8"/><rect x="452.90000000000003" y="103.5" width="1.4" height="1.4" fill="#3c95e8"/><path d="M456.5 98.2 L462.6 104.3" stroke="#6a6a6a" stroke-width="0.65"/><path d="M465.4 98.2 L471.6 104.5" stroke="#6a6a6a" stroke-width="0.65"/><path d="M472 105 l-2 -0.6 l1.4 -1.4z" fill="#6a6a6a"/><rect x="473.8" y="99" width="7.4" height="5.2" rx="1" fill="none" stroke="#6a6a6a" stroke-width="0.65"/><ellipse cx="486.5" cy="101.5" rx="3.5" ry="2.7" fill="none" stroke="#6a6a6a" stroke-width="0.65"/><rect x="492.3" y="99" width="6.8" height="5.2" rx="1.3" fill="none" stroke="#6a6a6a" stroke-width="0.65"/><path d="M450.5 107.4 L454 113.6 H447 z" fill="none" stroke="#6a6a6a" stroke-width="0.65"/><path d="M456.6 107.6 h2.6 v6 h3.4" fill="none" stroke="#6a6a6a" stroke-width="0.65"/><path d="M465.6 107.6 h2.6 v6 h3" fill="none" stroke="#6a6a6a" stroke-width="0.65"/><circle cx="471.6" cy="113.6" r="0.7" fill="#6a6a6a"/><path d="M474 109.4 h3.6 v-1.6 l3.4 2.6 l-3.4 2.6 v-1.6 h-3.6z" fill="none" stroke="#6a6a6a" stroke-width="0.6"/><path d="M485.6 107.4 v3.4 h-1.8 l2.9 3.2 l2.9 -3.2 h-1.8 v-3.4z" fill="none" stroke="#6a6a6a" stroke-width="0.6"/><path d="M492.4 107.6 h4.2 l2.4 2.4 v3.6 h-6.6z" fill="none" stroke="#6a6a6a" stroke-width="0.6" stroke-linejoin="round"/><path d="M448 121.5 c0 -3 2 -3.5 3 -4.6 c-1.4 0.4 -3.5 1.6 -1.8 3.4 c1 1 2.4 0.6 4.2 1" fill="none" stroke="#6a6a6a" stroke-width="0.6"/><path d="M456.6 117 c3 0 5.4 2 6 5.6" fill="none" stroke="#6a6a6a" stroke-width="0.65"/><path d="M465.6 119.2 c1.2 -2.4 2.4 -2.8 3.2 -1 c0.8 1.8 1.6 3.4 3.2 4.6" fill="none" stroke="#6a6a6a" stroke-width="0.65"/><path d="M478.4 116.6 c-1.4 0 -1 2.8 -2 2.8 c1 0 0.6 3 2 3" fill="none" stroke="#6a6a6a" stroke-width="0.6"/><path d="M486.4 116.6 c1.4 0 1 2.8 2 2.8 c-1 0 -0.6 3 -2 3" fill="none" stroke="#6a6a6a" stroke-width="0.6"/><path d="M495.8 116.5 l0.9 2 l2.2 0.2 l-1.7 1.4 l0.6 2.2 l-2 -1.2 l-2 1.2 l0.6 -2.2 l-1.7 -1.4 l2.2 -0.2z" fill="none" stroke="#6a6a6a" stroke-width="0.6"/><path d="M503 101.3 l1 -0.9 l1 0.9" stroke="#c0c0c0" stroke-width="0.5" fill="none"/><path d="M502.8 109.6 h2 l-1 1z" fill="#555"/><path d="M502.8 118.4 h2 M502.8 119.4 h2 l-1 1z" stroke="#9a9a9a" stroke-width="0.4" fill="#9a9a9a"/><rect x="517.4" y="97" width="9.4" height="9" fill="#fad28a" stroke="#f4b860" stroke-width="0.6"/><rect x="516" y="95.5" width="5" height="5" rx="0.6" fill="#fff" stroke="#707070" stroke-width="0.9"/><rect x="523.4" y="102.5" width="5" height="5" rx="0.6" fill="#fff" stroke="#707070" stroke-width="0.9"/><path d="M520.1 119.89999999999999 L521.6 121.39999999999999 L523.1 119.89999999999999z" fill="#555"/><rect x="542.2" y="95.4" width="12.6" height="12" rx="0.8" fill="#f2f2f2" stroke="#c4c4c4" stroke-width="0.7"/><path d="M547 107 L555.6 99.4" stroke="#b8b8b8" stroke-width="1.6"/><path d="M556.7 120.7 L558.2 122.2 L559.7 120.7z" fill="#b8b8b8"/><path d="M566 99 l2.2 -2.2 l2.2 2.2 l-2.2 2.2z M568.2 94.8 v2" stroke="#b8b8b8" stroke-width="0.7" fill="none"/><rect x="564.3" y="100.8" width="7.4" height="1" fill="#b0b0b0"/><path d="M635.2 98.3 L636.7 99.8 L638.2 98.3z" fill="#c0c0c0"/><rect x="564.6" y="106.6" width="6" height="5" fill="none" stroke="#b8b8b8" stroke-width="0.6"/><path d="M566.4 110.6 l4.6 -4.6" stroke="#b8b8b8" stroke-width="0.8"/><rect x="564.3" y="112.5" width="7.4" height="1" fill="#b0b0b0"/><path d="M621.3 110.1 L622.8 111.6 L624.3 110.1z" fill="#c0c0c0"/><circle cx="568" cy="121.3" r="3.4" fill="#c8c8c8" stroke="#b0b0b0" stroke-width="0.5"/><path d="M566.4 120.8 l3 -1.8" stroke="#fff" stroke-width="0.7"/><path d="M614.5 121.7 L616 123.2 L617.5 121.7z" fill="#c0c0c0"/><path d="M640.2 133.20000000000002 v-3.4 h3.4" stroke="#666" stroke-width="0.6" fill="none"/><path d="M641.2 130.8 L643.4000000000001 133.0 M643.6 131.4 v1.8 h-1.8" stroke="#444" stroke-width="0.7" fill="none"/><rect x="643.9499999999999" y="95" width="0.7" height="38.5" fill="#e1e1e1"/><circle cx="654.6" cy="97.4" r="2.6" fill="none" stroke="#555" stroke-width="0.75"/><path d="M652.7 99.4 L650.3 101.8" stroke="#555" stroke-width="0.9"/><path d="M652 113.4 L654.3 106.6 L656.8 113.4 M653 110.8 h2.8" stroke="#555" stroke-width="0.6" fill="none"/><path d="M650 109.8 a2 2 0 0 0 2.4 2.6" stroke="#2b88d8" stroke-width="0.9" fill="none"/><circle cx="652.6" cy="112.6" r="0.8" fill="#2b88d8"/><path d="M651 118.2 v6.2 l1.6 -1.5 l1.3 2.6 l0.9 -0.5 l-1.3 -2.5 h2.2z" stroke="#555" stroke-width="0.6" fill="#fff" stroke-linejoin="round"/><path d="M684.9 121.7 L686.4 123.2 L687.9 121.7z" fill="#555"/><rect x="714.15" y="95" width="0.7" height="38.5" fill="#e1e1e1"/><path d="M737.6 96.2 h6.4 l3 3 v7.8 h-9.4z" fill="#fff" stroke="#5a8ee8" stroke-width="0.8" stroke-linejoin="round"/><path d="M744.0 96.2 v3 h3" fill="none" stroke="#5a8ee8" stroke-width="0.6"/><path d="M740.2 103.4 c1 -1.6 1.6 -3.2 1.6 -4.6 c0.6 1.6 1.4 2.8 2.6 3.6" fill="none" stroke="#5a8ee8" stroke-width="0.55"/><path d="M744 107.6 l4.4 -4.4" stroke="#fff" stroke-width="2.6"/><rect x="743.2" y="104.8" width="3" height="2" rx="1" transform="rotate(-45 744.7 105.8)" fill="none" stroke="#5a8ee8" stroke-width="0.7"/><rect x="745.8" y="102.6" width="3" height="2" rx="1" transform="rotate(-45 747.3 103.6)" fill="none" stroke="#5a8ee8" stroke-width="0.7"/><path d="M744.2 107.8 l-0.8 0.8" stroke="#5a8ee8" stroke-width="0.7"/><path d="M792.6 96.2 h6.4 l3 3 v7.8 h-9.4z" fill="#fff" stroke="#5a8ee8" stroke-width="0.8" stroke-linejoin="round"/><path d="M799.0 96.2 v3 h3" fill="none" stroke="#5a8ee8" stroke-width="0.6"/><path d="M795.2 103.4 c1 -1.6 1.6 -3.2 1.6 -4.6 c0.6 1.6 1.4 2.8 2.6 3.6" fill="none" stroke="#5a8ee8" stroke-width="0.55"/><rect x="797.2" y="103.4" width="7" height="5.4" rx="0.8" fill="#fff" stroke="#5a8ee8" stroke-width="0.8"/><path d="M797.6 104.2 l3.1 2.2 l3.1 -2.2" fill="none" stroke="#5a8ee8" stroke-width="0.6"/><rect x="829.9499999999999" y="95" width="0.7" height="38.5" fill="#e1e1e1"/><rect x="840.6" y="94.8" width="5.4" height="9.6" rx="2.7" fill="#62a8e8" stroke="#3a86d0" stroke-width="0.5"/><path d="M839 101.6 a4.3 4.3 0 0 0 8.6 0 M843.3 105.9 v2.4" stroke="#666" stroke-width="0.6" fill="none"/><path d="M841.7 120.5 L843.2 122.0 L844.7 120.5z" fill="#555"/><rect x="856.05" y="95" width="0.7" height="38.5" fill="#e1e1e1"/><rect x="870.6" y="95.2" width="12.8" height="12.6" fill="#f8c4b4" stroke="#ee8a6e" stroke-width="0.8" stroke-dasharray="1.4 0.6"/><circle cx="874.3" cy="98.8" r="1.7" fill="#fff" stroke="#f09a80" stroke-width="0.4"/><circle cx="874.3" cy="104.2" r="1.7" fill="#fff" stroke="#f09a80" stroke-width="0.4"/><circle cx="879.7" cy="98.8" r="1.7" fill="#fff" stroke="#f09a80" stroke-width="0.4"/><circle cx="879.7" cy="104.2" r="1.7" fill="#fff" stroke="#f09a80" stroke-width="0.4"/><rect x="896.35" y="95" width="0.7" height="38.5" fill="#e1e1e1"/><rect x="906.4" y="97.2" width="12" height="9.8" fill="#fff" stroke="#777" stroke-width="0.9"/><path d="M906.8 99.6 h11.2 M913.6 99.6 v7" stroke="#777" stroke-width="0.8"/><path d="M907.8 94 l-2.6 4.4 h2 l-1.4 3.8 l3.4 -4.8 h-2z" fill="#f6a623" stroke="#f39c12" stroke-width="0.3"/><rect x="926.65" y="95" width="0.7" height="38.5" fill="#e1e1e1"/><path d="M932.4 129.2 l1.8 1.8 l1.8 -1.8" stroke="#555" stroke-width="0.6" fill="none"/><rect x="87.1" y="141.1" width="7.4" height="7.4" rx="0.8" fill="#b455c8"/><rect x="88.9" y="141.8" width="3.8" height="2.2" fill="#fff" opacity="0.85"/><rect x="88.9" y="145.6" width="3.8" height="2.4" fill="#fff" opacity="0.85"/><path d="M101 142.4 v2.4 h2.4 M101.2 144.6 a3 3 0 1 1 2.2 4.2" stroke="#a8a8a8" stroke-width="0.8" fill="none"/><path d="M110.5 143.6 l0.8 0.8 l0.8 -0.8" stroke="#c0c0c0" stroke-width="0.5" fill="none"/><path d="M123 142.6 a3.4 3.4 0 1 1 -3.8 -0.6 M123.6 141 v2.2 h-2.2" stroke="#a8a8a8" stroke-width="0.8" fill="none"/><path d="M131.6 146.8 l3.4 -3.4 l2 2 l-3.4 3.4z M135.6 144.2 l2.2 -2.2" stroke="#a8a8a8" stroke-width="0.8" fill="none"/><rect x="144" y="142" width="7.2" height="6.2" fill="#8c8c8c"/><rect x="145" y="144.6" width="2.2" height="2.6" fill="#fff"/><rect x="148" y="144.6" width="2.2" height="2.6" fill="#fff"/><circle cx="145" cy="141.8" r="1" fill="#5cb85c"/><path d="M153.2 143.70000000000002 L154.7 145.20000000000002 L156.2 143.70000000000002z" fill="#444"/><rect x="159.1" y="141.5" width="7.8" height="6.3" fill="#8c8c8c"/><rect x="160.2" y="143.8" width="2.6" height="2.4" fill="#fff"/><rect x="163.2" y="143.8" width="2.6" height="2.4" fill="#fff"/><path d="M169.7 143.70000000000002 L171.2 145.20000000000002 L172.7 143.70000000000002z" fill="#444"/><rect x="178.2" y="141.8" width="7.2" height="6" fill="#8fc3ec" stroke="#777" stroke-width="0.6"/><rect x="179.6" y="144.6" width="4.4" height="1" fill="#fff"/><rect x="189.6" y="141.2" width="3.7" height="3.7" fill="#2d3e5a"/><rect x="193.3" y="141.2" width="3.7" height="3.7" fill="#fff" stroke="#ccc" stroke-width="0.3"/><rect x="189.6" y="144.9" width="3.7" height="3.6" fill="#2e6ed2"/><rect x="193.3" y="144.9" width="3.7" height="3.6" fill="#f07a20"/><path d="M199.4 143.70000000000002 L200.9 145.20000000000002 L202.4 143.70000000000002z" fill="#444"/><rect x="208.4" y="142" width="6.4" height="5.8" fill="#fff" stroke="#777" stroke-width="0.6"/><path d="M210.2 146.6 l1.4 -3.6 l1.4 3.6 M210.8 145.4 h1.6" stroke="#2b7cd3" stroke-width="0.6" fill="none"/><rect x="207.70000000000002" y="141.3" width="1.4" height="1.4" fill="#3c95e8"/><rect x="214.10000000000002" y="141.3" width="1.4" height="1.4" fill="#3c95e8"/><rect x="207.70000000000002" y="147.10000000000002" width="1.4" height="1.4" fill="#3c95e8"/><rect x="214.10000000000002" y="147.10000000000002" width="1.4" height="1.4" fill="#3c95e8"/><path d="M221.6 147 l2.8 -6 l2.8 6 M222.8 145 h3.2" stroke="#a8a8a8" stroke-width="0.7" fill="none"/><rect x="220.8" y="147.6" width="7.2" height="0.9" fill="#a8a8a8"/><path d="M231 143.8 l0.8 0.8 l0.8 -0.8" stroke="#c0c0c0" stroke-width="0.5" fill="none"/><rect x="238.4" y="141.8" width="6.5" height="0.6" fill="#a8a8a8"/><rect x="238.4" y="143.70000000000002" width="4" height="0.6" fill="#a8a8a8"/><rect x="238.4" y="145.60000000000002" width="6.5" height="0.6" fill="#a8a8a8"/><rect x="238.4" y="147.5" width="4" height="0.6" fill="#a8a8a8"/><rect x="251.9" y="141.8" width="6.5" height="0.6" fill="#a8a8a8"/><rect x="253.15" y="143.70000000000002" width="4" height="0.6" fill="#a8a8a8"/><rect x="251.9" y="145.60000000000002" width="6.5" height="0.6" fill="#a8a8a8"/><rect x="253.15" y="147.5" width="4" height="0.6" fill="#a8a8a8"/><rect x="264.8" y="141.8" width="6.5" height="0.6" fill="#a8a8a8"/><rect x="267.3" y="143.70000000000002" width="4" height="0.6" fill="#a8a8a8"/><rect x="264.8" y="145.60000000000002" width="6.5" height="0.6" fill="#a8a8a8"/><rect x="267.3" y="147.5" width="4" height="0.6" fill="#a8a8a8"/><path d="M291.6 145.6 l2.4 -2.4 l2.4 2.4 l-2.4 2.4z M294 141.4 v1.8" stroke="#a8a8a8" stroke-width="0.7" fill="none"/><rect x="290.6" y="147.8" width="7.6" height="0.9" fill="#a8a8a8"/><path d="M301.2 143.8 l0.8 0.8 l0.8 -0.8" stroke="#c0c0c0" stroke-width="0.5" fill="none"/><rect x="308.6" y="141.6" width="6" height="5" fill="none" stroke="#a8a8a8" stroke-width="0.6"/><path d="M310.6 145.8 l4.8 -4.6" stroke="#a8a8a8" stroke-width="0.8"/><rect x="308.2" y="147.8" width="7.6" height="0.9" fill="#a8a8a8"/><path d="M318.7 143.8 l0.8 0.8 l0.8 -0.8" stroke="#c0c0c0" stroke-width="0.5" fill="none"/><rect x="324" y="141.2" width="5" height="5" fill="#4a90e2"/><circle cx="329.2" cy="146.4" r="2.4" fill="#fff" stroke="#666" stroke-width="0.8"/><path d="M334.1 143.70000000000002 L335.6 145.20000000000002 L337.1 143.70000000000002z" fill="#444"/><circle cx="342.8" cy="143.6" r="2.2" fill="none" stroke="#a8a8a8" stroke-width="0.9"/><circle cx="345.6" cy="146.2" r="2.2" fill="none" stroke="#a8a8a8" stroke-width="0.9"/><path d="M351.5 143.8 l0.8 0.8 l0.8 -0.8" stroke="#c0c0c0" stroke-width="0.5" fill="none"/><path d="M366.79999999999995 141.2 v7.6" stroke="#a8a8a8" stroke-width="0.7"/><rect x="359.79999999999995" y="142.2" width="6.4" height="2" fill="none" stroke="#a8a8a8" stroke-width="0.6"/><rect x="362.4" y="145.6" width="3.8" height="2" fill="none" stroke="#a8a8a8" stroke-width="0.6"/><path d="M372.2 141.2 v7.6" stroke="#a8a8a8" stroke-width="0.7"/><rect x="372.8" y="142.2" width="3.8" height="2" fill="none" stroke="#a8a8a8" stroke-width="0.6"/><rect x="372.8" y="145.6" width="6.4" height="2" fill="none" stroke="#a8a8a8" stroke-width="0.6"/><path d="M385 141.4 h7.4" stroke="#a8a8a8" stroke-width="0.7"/><rect x="386" y="142" width="2" height="6.4" fill="none" stroke="#a8a8a8" stroke-width="0.6"/><rect x="389.4" y="142" width="2" height="4" fill="none" stroke="#a8a8a8" stroke-width="0.6"/><path d="M398.3 148.6 h7.4" stroke="#a8a8a8" stroke-width="0.7"/><rect x="399.3" y="141.6" width="2" height="6.4" fill="none" stroke="#a8a8a8" stroke-width="0.6"/><rect x="402.7" y="144" width="2" height="4" fill="none" stroke="#a8a8a8" stroke-width="0.6"/><path d="M411.6 145 h7.4" stroke="#a8a8a8" stroke-width="0.7"/><rect x="413.20000000000005" y="141.6" width="4.2" height="2.4" fill="none" stroke="#a8a8a8" stroke-width="0.6"/><rect x="413.20000000000005" y="146" width="4.2" height="2.4" fill="none" stroke="#a8a8a8" stroke-width="0.6"/><path d="M428.59999999999997 141.2 v7.6" stroke="#a8a8a8" stroke-width="0.7"/><rect x="425.5" y="142.4" width="2" height="5" fill="none" stroke="#a8a8a8" stroke-width="0.6"/><rect x="429.7" y="142.4" width="2" height="5" fill="none" stroke="#a8a8a8" stroke-width="0.6"/><path d="M437.7 141.2 v7.6 M444.79999999999995 141.2 v7.6" stroke="#a8a8a8" stroke-width="0.7"/><rect x="439.79999999999995" y="142.4" width="2.8" height="5" fill="none" stroke="#a8a8a8" stroke-width="0.6"/><path d="M450.7 141.3 h7.4 M450.7 148.7 h7.4" stroke="#a8a8a8" stroke-width="0.7"/><rect x="451.9" y="143.4" width="5" height="3" fill="none" stroke="#a8a8a8" stroke-width="0.6"/><ellipse cx="466.2" cy="145.2" rx="3.6" ry="2.8" fill="none" stroke="#a8a8a8" stroke-width="0.8"/><path d="M464 145.6 l2.6 -1.8" stroke="#a8a8a8" stroke-width="0.7"/><path d="M474 143.8 l0.8 0.8 l0.8 -0.8" stroke="#c0c0c0" stroke-width="0.5" fill="none"/><path d="M483 141 v6.2 h6.2 M481.2 143 h6.2 v6.2" stroke="#a8a8a8" stroke-width="0.7" fill="none"/><path d="M483.4 146.8 l4 -4" stroke="#a8a8a8" stroke-width="0.5"/><rect x="495.4" y="142.6" width="2.8" height="0.6" fill="#666"/><path d="M495.4 144 h2.8 l-1.4 1.6z" fill="#666"/><path d="M129.9 512.4 v1.2 M127.4 514 h5 M128.4 514 l-0.6 3.6 M131.4 514 l0.6 3.6 M129.9 514.4 v2.2 l-1.2 2.4 M129.9 516.6 l1.2 2.4 M127 519.4 h5.8" stroke="#444" stroke-width="0.65" fill="none"/><rect x="742.6" y="514.2" width="6.6" height="4.6" fill="none" stroke="#666" stroke-width="0.6"/><path d="M743.6 516 h4.6 M743.6 517.4 h4.6 M744.6 512.6 l1.3 -0.8 l1.3 0.8" stroke="#666" stroke-width="0.5" fill="none"/><rect x="789" y="513.2" width="6.8" height="5.2" fill="none" stroke="#444" stroke-width="0.7"/><rect x="790.8" y="514.6" width="3.2" height="2.4" fill="#555"/><rect x="807.2" y="513.2" width="2.8" height="2" fill="none" stroke="#555" stroke-width="0.55"/><rect x="811" y="513.2" width="2.8" height="2" fill="none" stroke="#555" stroke-width="0.55"/><rect x="807.2" y="516.4" width="2.8" height="2" fill="none" stroke="#555" stroke-width="0.55"/><rect x="811" y="516.4" width="2.8" height="2" fill="none" stroke="#555" stroke-width="0.55"/><rect x="825.2" y="513" width="6.2" height="5.6" fill="#777" stroke="#555" stroke-width="0.5"/><path d="M828.3 513 v5.6" stroke="#aaa" stroke-width="0.4"/><rect x="843.4" y="512.8" width="5.8" height="3.8" fill="none" stroke="#555" stroke-width="0.6"/><path d="M846.3 516.6 v1.6 M845 518.6 h2.6" stroke="#555" stroke-width="0.6"/><path d="M858 516.4 h3.2 M912.8 514.8 v3.2 M911.2 516.4 h3.2" stroke="#555" stroke-width="0.6"/><rect x="864" y="516.1" width="44.6" height="0.6" fill="#888"/><rect x="886.2" y="515.4" width="0.6" height="2" fill="#888"/><rect x="869.2" y="513.8" width="2" height="5.2" rx="0.4" fill="#555"/><path d="M938.6 513.2 l3.2 3.2 l-3.2 3.2 l-3.2 -3.2z" fill="none" stroke="#555" stroke-width="0.8"/><circle cx="938.6" cy="516.4" r="1.2" fill="#fff" stroke="#555" stroke-width="0.5"/></svg>
</body></html>
